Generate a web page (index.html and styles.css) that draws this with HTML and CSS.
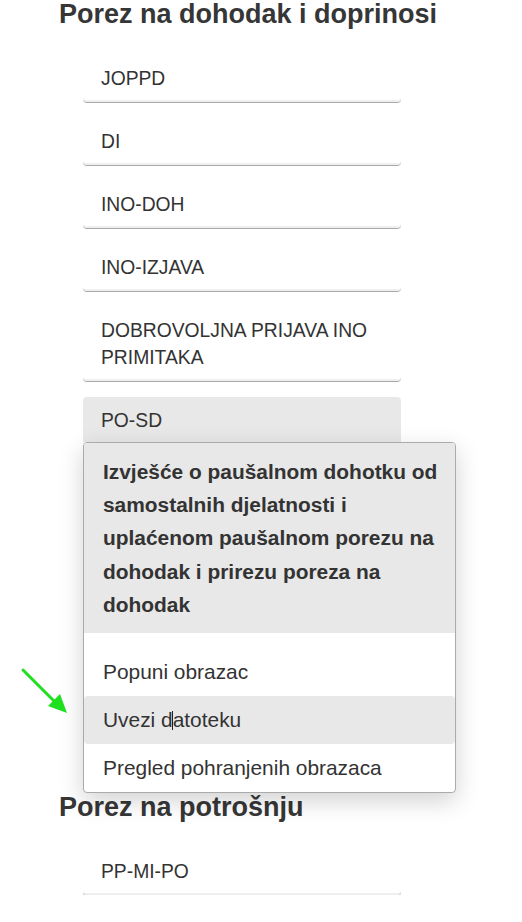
FILE: index.html
```html
<!DOCTYPE html>
<html lang="hr">
<head>
<meta charset="utf-8">
<title>Obrasci</title>
<link rel="stylesheet" href="styles.css">
</head>
<body>
<main class="page">
  <section class="group">
    <h2 class="group-title">Porez na dohodak i doprinosi</h2>
    <ul class="form-list">
      <li class="form-item">JOPPD</li>
      <li class="form-item">DI</li>
      <li class="form-item">INO-DOH</li>
      <li class="form-item">INO-IZJAVA</li>
      <li class="form-item">DOBROVOLJNA PRIJAVA INO PRIMITAKA</li>
      <li class="form-open">
        <div class="form-open__label">PO-SD</div>
        <div class="dropdown">
          <div class="dropdown__head">Izvješće o paušalnom dohotku od samostalnih djelatnosti i uplaćenom paušalnom porezu na dohodak i prirezu poreza na dohodak</div>
          <ul class="dropdown__menu">
            <li class="dropdown__item">Popuni obrazac</li>
            <li class="dropdown__item dropdown__item--hover">Uvezi d<span class="ibeam"></span>atoteku</li>
            <li class="dropdown__item">Pregled pohranjenih obrazaca</li>
          </ul>
        </div>
      </li>
    </ul>
  </section>
  <section class="group">
    <h2 class="group-title">Porez na potrošnju</h2>
    <ul class="form-list">
      <li class="form-item">PP-MI-PO</li>
    </ul>
  </section>
</main>
<svg class="pointer-arrow" width="56" height="56" viewBox="0 0 56 56" aria-hidden="true">
  <line x1="3" y1="5" x2="36" y2="38" stroke="#1fe01f" stroke-width="3" stroke-linecap="round"/>
  <polygon points="47,48 28,41 40,29" fill="#1fe01f"/>
</svg>
</body>
</html>
```

FILE: styles.css
```css
* {
  box-sizing: border-box;
}

html, body {
  margin: 0;
  padding: 0;
  background: #ffffff;
}

body {
  font-family: "Liberation Sans", Arial, sans-serif;
  color: #333333;
}

.page {
  padding: 0 0 0 59px;
  display: flex;
  flex-direction: column;
}

.group-title {
  margin: 0;
  font-size: 27px;
  line-height: 1.1;
  font-weight: bold;
  color: #363636;
}

.form-list {
  list-style: none;
  margin: 25px 0 0 0;
  padding: 0 0 0 24px;
  display: flex;
  flex-direction: column;
  gap: 16px;
}

.form-item {
  width: 318px;
  padding: 10px 18px 8px 18px;
  font-size: 19.3px;
  line-height: 27px;
  border-bottom: 2px solid #efefef;
  border-radius: 0 0 4px 4px;
  box-shadow: 0 1px 0 #a9a9a9;
}

.form-open {
  display: flex;
  flex-direction: column;
}

.form-open__label {
  width: 318px;
  height: 45px;
  padding: 10px 18px 0 18px;
  font-size: 19.3px;
  line-height: 27px;
  background: #e8e8e8;
  border-radius: 4px 4px 0 0;
}

.dropdown {
  width: 373px;
  border: 1px solid #ababab;
  border-radius: 4px;
  background: #ffffff;
  box-shadow: 0 8px 24px rgba(0, 0, 0, 0.18);
  overflow: hidden;
  position: relative;
}

.dropdown__head {
  background: #e8e8e8;
  padding: 12px 16px 12px 19px;
  font-size: 20.9px;
  line-height: 33.3px;
  font-weight: bold;
  color: #333333;
}

.dropdown__menu {
  list-style: none;
  margin: 0;
  padding: 15px 0 0 0;
}

.dropdown__item {
  padding: 12px 19px;
  font-size: 20.9px;
  line-height: 24px;
  color: #333333;
  border-radius: 4px;
}

.dropdown__item--hover {
  background: #e8e8e8;
}

.ibeam {
  display: inline-block;
  width: 1px;
  height: 19px;
  margin: 0 -0.5px;
  background: #222222;
  vertical-align: -3px;
}

.pointer-arrow {
  position: absolute;
  left: 20px;
  top: 665px;
}
```
